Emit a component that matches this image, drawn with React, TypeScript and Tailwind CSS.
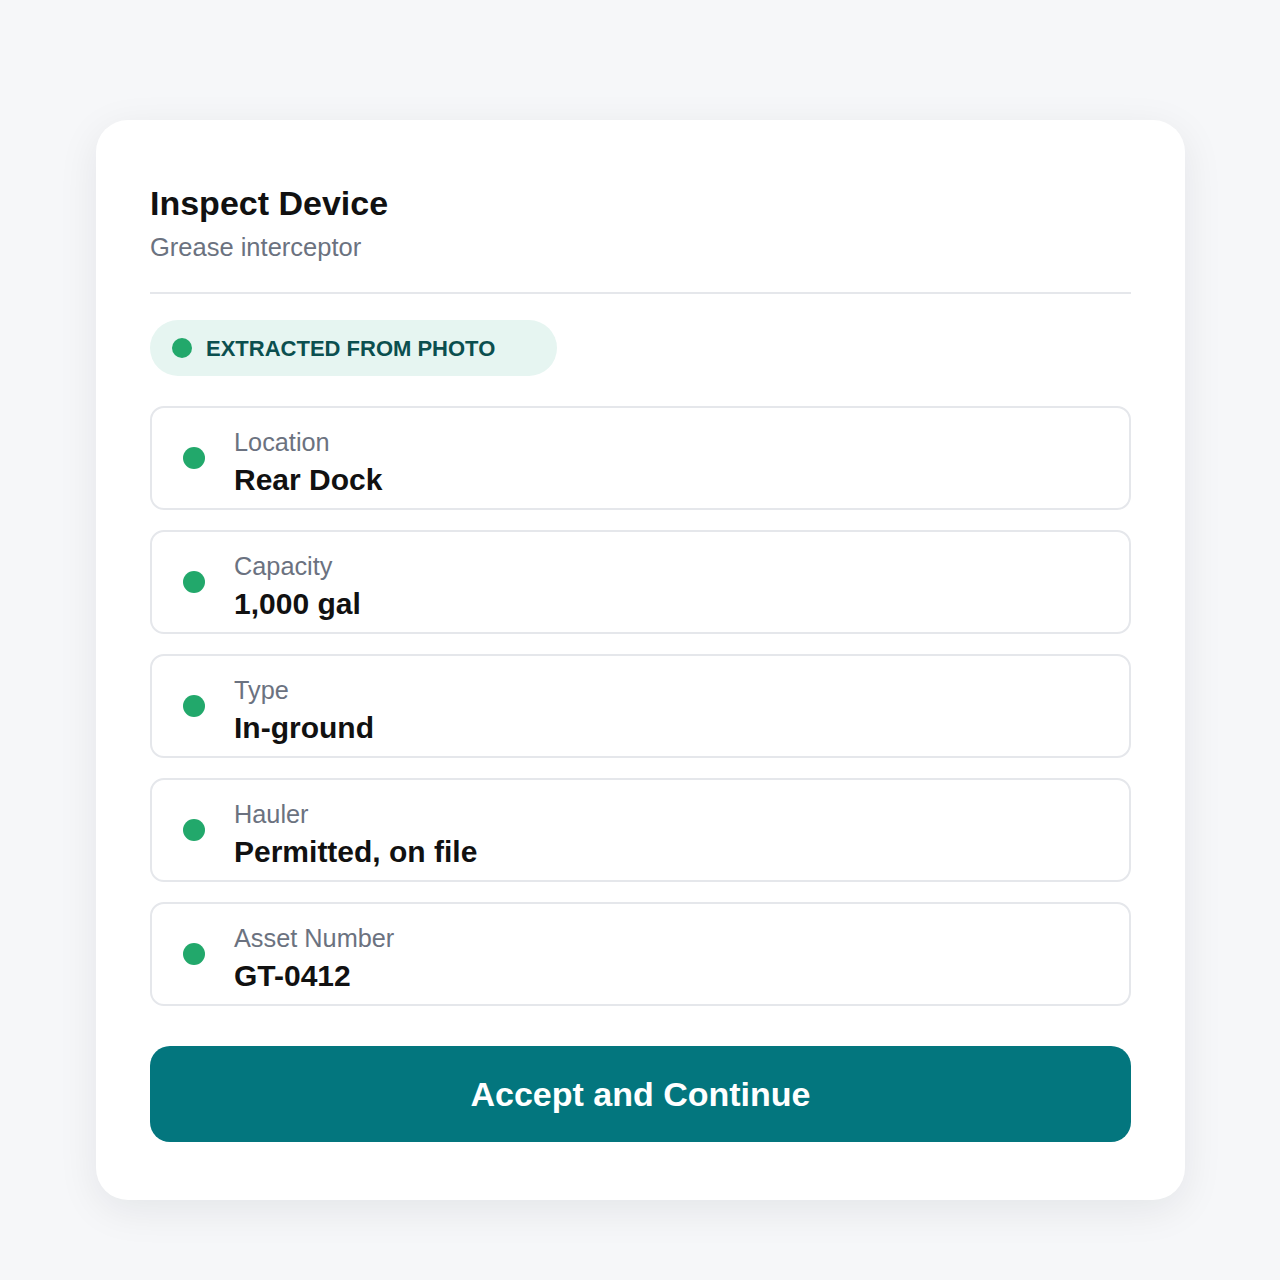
const fields = [
  { label: "Location", value: "Rear Dock" },
  { label: "Capacity", value: "1,000 gal" },
  { label: "Type", value: "In-ground" },
  { label: "Hauler", value: "Permitted, on file" },
  { label: "Asset Number", value: "GT-0412" },
];

function FieldRow({ label, value }: { label: string; value: string }) {
  return (
    <div className="flex items-center h-[104px] rounded-[14px] border-2 border-[#e5e7eb] pl-[31px] pr-6">
      <span className="w-[22px] h-[22px] rounded-full bg-[#22a86b] shrink-0" />
      <div className="ml-[29px] pt-[9px] flex flex-col">
        <span className="text-[25.3px] leading-[30px] text-[#6b7280]">{label}</span>
        <span className="mt-[5px] text-[30px] leading-[36px] font-bold text-[#111111]">{value}</span>
      </div>
    </div>
  );
}

export default function App() {
  return (
    <div className="min-h-[1280px] w-full bg-[#f6f7f9] pt-[120px] px-[96px] font-['Liberation_Sans',Arial,sans-serif]">
      <div className="w-[1089px] h-[1080px] bg-white rounded-[32px] shadow-[0_10px_40px_rgba(15,23,42,0.08)] px-[54px] pt-[62px]">
        {/* Header */}
        <h1 className="text-[34px] leading-[42px] font-bold text-[#111111]">Inspect Device</h1>
        <p className="mt-[7px] text-[25.5px] leading-[32px] text-[#6b7280]">Grease interceptor</p>
        <div className="mt-[29px] h-[2px] bg-[#e5e7eb]" />

        {/* Badge */}
        <div className="mt-[26px] inline-flex items-center h-[56px] rounded-full bg-[#e6f5f1] pl-[22px] pr-[62px]">
          <span className="w-[20px] h-[20px] rounded-full bg-[#22a86b]" />
          <span className="ml-[14px] text-[22px] font-bold text-[#0b4f4f]">EXTRACTED FROM PHOTO</span>
        </div>

        {/* Fields */}
        <div className="mt-[30px] flex flex-col gap-5">
          {fields.map((f) => (
            <FieldRow key={f.label} label={f.label} value={f.value} />
          ))}
        </div>

        <button className="mt-[40px] w-full h-[96px] rounded-[20px] bg-[#03767e] text-white text-[34px] font-bold">
          Accept and Continue
        </button>
      </div>
    </div>
  );
}
